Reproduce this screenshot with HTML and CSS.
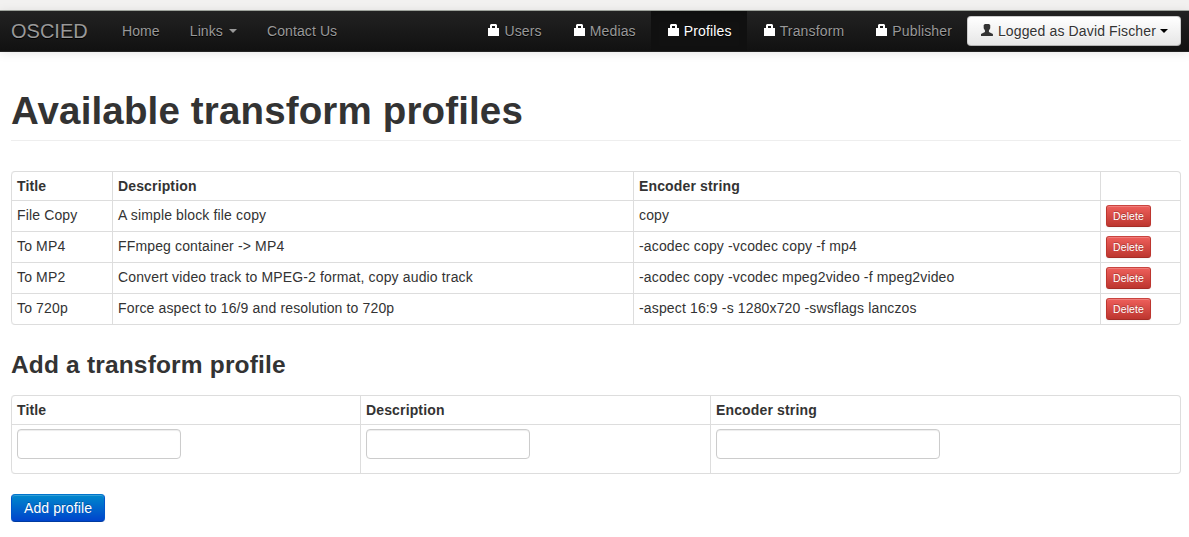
FILE: index.html
```html
<!DOCTYPE html>
<html lang="en">
<head>
<meta charset="utf-8">
<title>OSCIED</title>
<link rel="stylesheet" href="styles.css">
</head>
<body>
<svg class="sprite" width="0" height="0">
  <symbol id="lock" viewBox="0 0 11 12"><path fill="#fff" d="M3 0h5l1 1v3h2v8H0V4h2V1zM4 2v2h3V2z" fill-rule="evenodd"/></symbol>
  <symbol id="user" viewBox="0 0 12 12"><path fill="#333" d="M4 0h4l1.300 1v3.200L8 6.500V8l4 2v2H0v-2l4-2V6.500L2.700 4.200V1z"/></symbol>
</svg>
<div class="chrome-strip"></div>
<nav class="navbar">
  <a class="brand">OSCIED</a>
  <div class="nav">
    <a class="nav-link">Home</a>
    <a class="nav-link">Links <b class="caret"></b></a>
    <a class="nav-link">Contact Us</a>
  </div>
  <div class="nav nav-right">
    <a class="nav-link"><svg class="icon"><use href="#lock"/></svg>Users</a>
    <a class="nav-link"><svg class="icon"><use href="#lock"/></svg>Medias</a>
    <a class="nav-link active"><svg class="icon"><use href="#lock"/></svg>Profiles</a>
    <a class="nav-link"><svg class="icon"><use href="#lock"/></svg>Transform</a>
    <a class="nav-link"><svg class="icon"><use href="#lock"/></svg>Publisher</a>
    <button class="btn btn-user"><svg class="icon icon-user"><use href="#user"/></svg>Logged as David Fischer<b class="caret"></b></button>
  </div>
</nav>
<main class="container">
  <h1 class="page-header">Available transform profiles</h1>
  <table class="table profiles">
    <colgroup><col class="p-title"><col class="p-desc"><col class="p-enc"><col></colgroup>
    <tr><th>Title</th><th>Description</th><th>Encoder string</th><th></th></tr>
    <tr><td>File Copy</td><td>A simple block file copy</td><td>copy</td><td><button class="btn btn-danger">Delete</button></td></tr>
    <tr><td>To MP4</td><td>FFmpeg container -&gt; MP4</td><td>-acodec copy -vcodec copy -f mp4</td><td><button class="btn btn-danger">Delete</button></td></tr>
    <tr><td>To MP2</td><td>Convert video track to MPEG-2 format, copy audio track</td><td>-acodec copy -vcodec mpeg2video -f mpeg2video</td><td><button class="btn btn-danger">Delete</button></td></tr>
    <tr><td>To 720p</td><td>Force aspect to 16/9 and resolution to 720p</td><td>-aspect 16:9 -s 1280x720 -swsflags lanczos</td><td><button class="btn btn-danger">Delete</button></td></tr>
  </table>
  <h2 class="subtitle">Add a transform profile</h2>
  <table class="table add-form">
    <colgroup><col class="a-title"><col class="a-desc"><col></colgroup>
    <tr><th>Title</th><th>Description</th><th>Encoder string</th></tr>
    <tr><td><input class="field" type="text"></td><td><input class="field" type="text"></td><td><input class="field field-wide" type="text"></td></tr>
  </table>
  <button class="btn btn-primary">Add profile</button>
</main>
</body>
</html>
```
FILE: styles.css
```css
* { box-sizing: border-box; }
body {
  margin: 0;
  background: #fff;
  color: #333;
  font: 14px/20px "Liberation Sans", Arial, sans-serif;
}
.sprite { display: none; }
.chrome-strip {
  height: 11px;
  background: #f2f1f0;
  border-bottom: 1px solid #a5aaa3;
}
.navbar {
  display: flex;
  height: 41px;
  padding: 0 8px 0 11px;
  background: linear-gradient(#222, #111);
  border-bottom: 1px solid #252525;
  box-shadow: 0 1px 10px rgba(0, 0, 0, .1);
  color: #999;
  white-space: nowrap;
}
.brand {
  width: 96px;
  padding-top: 10px;
  font-size: 20px;
  text-shadow: 0 1px 0 #000;
}
.nav { display: flex; letter-spacing: .1px; }
.nav-right { margin-left: auto; letter-spacing: .15px; }
.nav-link {
  display: flex;
  height: 40px;
  padding: 10px 15px;
  text-shadow: 0 1px 0 #000;
}
.nav-link.active {
  color: #fff;
  background: #111;
  box-shadow: inset 0 3px 8px rgba(0, 0, 0, .125);
}
.icon {
  width: 11px;
  height: 12px;
  margin: 3px 5px 0 2px;
}
.icon-user { width: 12px; margin: 3px 5px 0 1px; }
.caret {
  width: 0;
  height: 0;
  margin: 8px 0 0 6px;
  border: 4px solid transparent;
  border-top-color: currentColor;
  border-bottom: 0;
}
.btn {
  font: inherit;
  border: 1px solid;
  border-radius: 4px;
  white-space: nowrap;
}
.btn-user {
  display: flex;
  width: 214px;
  height: 30px;
  margin-top: 5px;
  padding: 4px 12px;
  color: #333;
  letter-spacing: .14px;
  background: linear-gradient(#fff, #e6e6e6);
  border-color: #ccc #ccc #b3b3b3;
  box-shadow: inset 0 1px 0 rgba(255, 255, 255, .2);
  text-shadow: 0 1px 1px rgba(255, 255, 255, .75);
}
.btn-user .caret { margin: 8px 0 0 4px; color: #000; }
.container { padding: 39px 8px 0 11px; }
.page-header {
  height: 50px;
  margin: 0 0 30px;
  border-bottom: 1px solid #eee;
  font-size: 38.5px;
  line-height: 40px;
  letter-spacing: .15px;
}
.table {
  width: 100%;
  table-layout: fixed;
  border-collapse: separate;
  border-spacing: 0;
  border: 1px solid #ddd;
  border-left: 0;
  border-radius: 4px;
  letter-spacing: .145px;
}
.table th, .table td {
  padding: 4px 5px;
  text-align: left;
  vertical-align: top;
  border-left: 1px solid #ddd;
}
.table td { border-top: 1px solid #ddd; }
.table th:first-child { border-top-left-radius: 4px; }
.table tr:last-child td:first-child { border-bottom-left-radius: 4px; }
.profiles td { height: 31px; }
.p-title { width: 101px; }
.p-desc { width: 521px; }
.p-enc { width: 467px; }
.btn-danger {
  display: block;
  width: 45px;
  height: 22px;
  padding: 0 0 1px;
  border-radius: 3px;
  color: #fff;
  font-size: 10.5px;
  line-height: 18px;
  letter-spacing: .1px;
  background: linear-gradient(#ee5f5b, #bd362f);
  border-color: #c9443f #bd362f #a52d27;
  box-shadow: inset 0 1px 0 rgba(255, 255, 255, .2), 0 1px 2px rgba(0, 0, 0, .05);
  text-shadow: 0 -1px 0 rgba(0, 0, 0, .25);
}
.subtitle {
  margin: 20px 0 10px;
  font-size: 24.5px;
  line-height: 40px;
  letter-spacing: .17px;
}
.a-title { width: 349px; }
.a-desc { width: 350px; }
.add-form td { height: 49px; }
.field {
  display: block;
  width: 164px;
  height: 30px;
  padding: 4px 6px;
  border: 1px solid #ccc;
  border-radius: 4px;
  background: #fff;
  box-shadow: inset 0 1px 1px rgba(0, 0, 0, .075);
}
.field-wide { width: 224px; }
.btn-primary {
  display: block;
  width: 94px;
  height: 28px;
  margin-top: 20px;
  padding: 3px 0;
  color: #fff;
  letter-spacing: .1px;
  background: linear-gradient(#08c, #04c);
  border-color: #0074cc #0055cc #003ba0;
  box-shadow: inset 0 1px 0 rgba(255, 255, 255, .2), 0 1px 2px rgba(0, 0, 0, .05);
  text-shadow: 0 -1px 0 rgba(0, 0, 0, .25);
}
```
